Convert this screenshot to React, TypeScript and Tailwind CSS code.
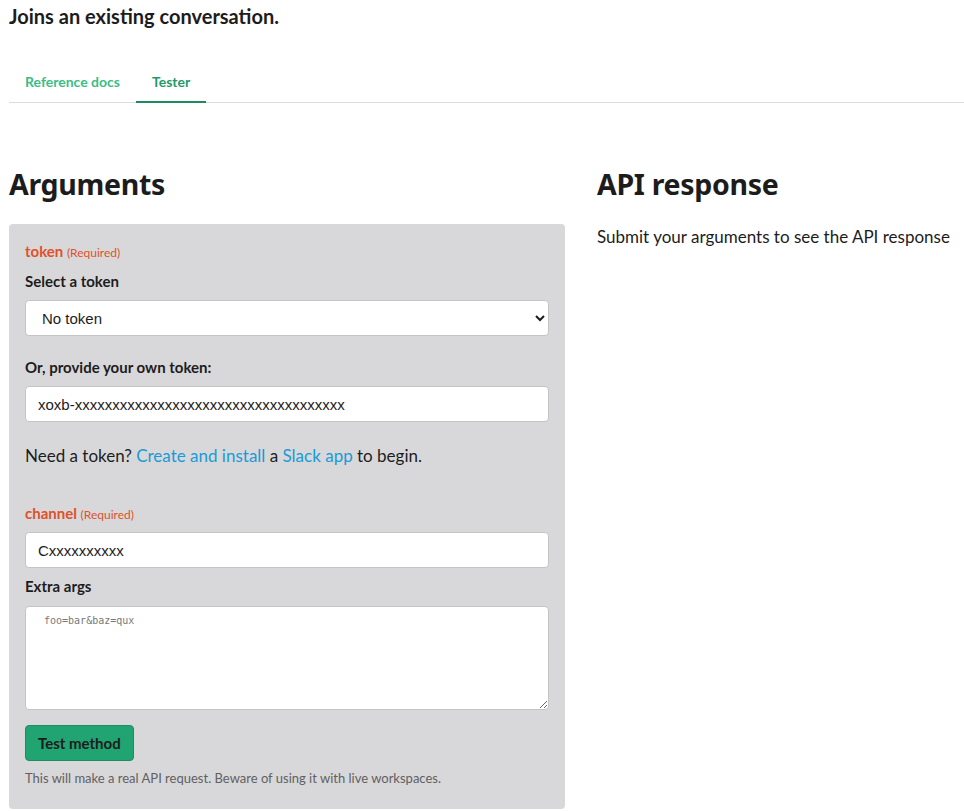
export default function App() {
  return (
    <div className="min-h-screen bg-white pl-[9px] text-[#1d1c1d]" style={{ fontFamily: "Lato, 'Noto Sans', sans-serif" }}>
      <h1 className="pt-[2px] text-[20px] font-bold leading-[28px]">Joins an existing conversation.</h1>

      <div className="mt-[40px] flex border-b border-[#dddddd]">
        <button className="px-4 pt-[2px] pb-[10px] text-[14px] font-bold leading-5 text-[#3bbd85]">Reference docs</button>
        <button className="-mb-px border-b-2 border-[#1e8a60] px-4 pt-[2px] pb-[9px] text-[14px] font-bold leading-5 text-[#1d9a6c]">Tester</button>
      </div>

      <div className="mt-[62px] grid grid-cols-[556px_1fr] gap-8">
        <section>
          <h2 className="text-[28.5px] font-bold leading-[38px] tracking-[-0.3px]" style={{ fontFamily: "'Noto Sans', Inter, sans-serif" }}>Arguments</h2>
          <div className="mt-[21px] rounded bg-[#d8d8da] px-4 pt-[17px] pb-[23px]">
            <div className="text-[15px] font-bold leading-5 text-[#e0512a]">
              token <span className="text-[12px] font-normal">(Required)</span>
            </div>
            <label className="mt-[8px] block text-[15px] font-bold leading-5">Select a token</label>
            <select
              className="mt-[9px] h-[36px] w-full rounded border border-[#c4c4c4] bg-white px-[12px] text-[15px] outline-none"
              style={{ fontFamily: "'Liberation Sans', Arial, sans-serif" }}
              defaultValue="none"
            >
              <option value="none">No token</option>
            </select>

            <label className="mt-[21px] block text-[15px] font-bold leading-5">Or, provide your own token:</label>
            <input
              className="mt-[9px] h-[36px] w-full rounded border border-[#c4c4c4] bg-white px-[12px] text-[15px] outline-none"
              style={{ fontFamily: "'Liberation Sans', Arial, sans-serif" }}
              defaultValue="xoxb-xxxxxxxxxxxxxxxxxxxxxxxxxxxxxxxxxxxx"
            />

            <p className="mt-[22px] text-[17px] leading-6">
              Need a token? <a className="text-[#1a9bd7]">Create and install</a> a <a className="text-[#1a9bd7]">Slack app</a> to begin.
            </p>

            <div className="mt-[35px] text-[15px] font-bold leading-5 text-[#e0512a]">
              channel <span className="text-[12px] font-normal">(Required)</span>
            </div>
            <input
              className="mt-[7px] h-[36px] w-full rounded border border-[#c4c4c4] bg-white px-[12px] text-[15px] outline-none"
              style={{ fontFamily: "'Liberation Sans', Arial, sans-serif" }}
              defaultValue="Cxxxxxxxxxx"
            />

            <label className="mt-[8px] block text-[15px] font-bold leading-5">Extra args</label>
            <textarea
              className="mt-[10px] block h-[104px] w-full rounded border border-[#c4c4c4] bg-white px-[18px] py-[6px] text-[10px] outline-none placeholder:text-[#777]"
              style={{ fontFamily: "'DejaVu Sans Mono', 'Liberation Mono', monospace" }}
              placeholder="foo=bar&baz=qux"
            />

            <button className="mt-[15px] h-[36px] rounded border border-[#1b8f63] bg-[#1fa472] px-3 text-[15px] font-bold text-[#1d1c1d]">
              Test method
            </button>
            <p className="mt-[9px] text-[13px] leading-4 text-[#616061]">
              This will make a real API request. Beware of using it with live workspaces.
            </p>
          </div>
        </section>

        <section>
          <h2 className="text-[28.5px] font-bold leading-[38px] tracking-[-0.3px]" style={{ fontFamily: "'Noto Sans', Inter, sans-serif" }}>API response</h2>
          <p className="mt-[22px] text-[17px] leading-6">Submit your arguments to see the API response</p>
        </section>
      </div>
    </div>
  );
}
